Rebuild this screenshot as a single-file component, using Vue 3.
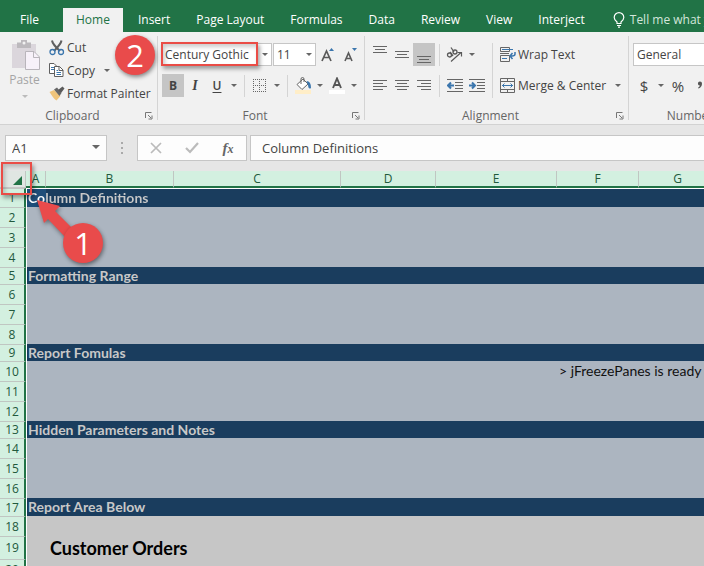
<script setup>
import { ref } from 'vue'

const tabs = ['File', 'Home', 'Insert', 'Page Layout', 'Formulas', 'Data', 'Review', 'View', 'Interject']
const activeTab = ref('Home')
const fontName = ref('Century Gothic')
const fontSize = ref('11')
const numberFormat = ref('General')
const cellName = ref('A1')
const formula = ref('Column Definitions')

const columns = ['A', 'B', 'C', 'D', 'E', 'F', 'G']

const rows = [
  { n: 1, kind: 'band first', text: 'Column Definitions' },
  { n: 2, kind: 'plain' },
  { n: 3, kind: 'plain' },
  { n: 4, kind: 'plain' },
  { n: 5, kind: 'band', text: 'Formatting Range' },
  { n: 6, kind: 'plain' },
  { n: 7, kind: 'plain' },
  { n: 8, kind: 'plain' },
  { n: 9, kind: 'band', text: 'Report Fomulas' },
  { n: 10, kind: 'plain', note: '> jFreezePanes is ready' },
  { n: 11, kind: 'plain' },
  { n: 12, kind: 'plain' },
  { n: 13, kind: 'band', text: 'Hidden Parameters and Notes' },
  { n: 14, kind: 'plain' },
  { n: 15, kind: 'plain' },
  { n: 16, kind: 'plain' },
  { n: 17, kind: 'band last', text: 'Report Area Below' },
  { n: 18, kind: 'report' },
  { n: 19, kind: 'report tall', title: 'Customer Orders' },
  { n: 20, kind: 'report' }
]

function cellText(row, col) {
  if (col === 'A') return row.text
  if (col === 'B') return row.title
  if (col === 'F') return row.note
  return ''
}
</script>

<template>
  <div class="app">
    <nav class="tabs" aria-label="Ribbon tabs">
      <button
        v-for="tab in tabs"
        :key="tab"
        type="button"
        class="tab"
        :class="{ active: tab === activeTab, file: tab === 'File' }"
        @click="activeTab = tab"
      >{{ tab }}</button>
      <button type="button" class="tell">
        <svg width="12" height="16" viewBox="0 0 12 16" fill="none" stroke="#fff">
          <path d="M4 11.5V10C2.500 8.700 1.200 7.500 1.200 5.400A4.700 4.700 0 0 1 10.800 5.400C10.800 7.500 9.500 8.700 8 10V11.500ZM4 13.500H8M5 15.200H7" stroke-width="1.200" />
        </svg>
        <span>Tell me what you want to do</span>
      </button>
    </nav>

    <div class="ribbon">
      <section class="group clipboard">
        <div class="body">
          <button type="button" class="paste" disabled>
            <svg width="30" height="31" viewBox="0 0 30 31">
              <path d="M1 4H25V28H1Z" fill="#dbd6dc" />
              <path d="M6 2.500H10V0H16V2.500H20V8H6Z" fill="#bcb9bd" />
              <circle cx="13" cy="3" r="1.500" fill="#f1f1f1" />
              <path d="M14.500 11.500H23L28.500 17V29.500H14.500Z" fill="#f7f1f9" stroke="#b9b5bb" />
              <path d="M22.500 11.500V17.500H28.500" fill="none" stroke="#b9b5bb" />
            </svg>
            <span>Paste</span>
            <i class="caret faint"></i>
          </button>
          <div class="commands">
            <button type="button" class="command">
              <svg width="16" height="16" viewBox="0 0 16 16" fill="none">
                <path d="M3 0.500C3.500 4 6 6.500 11 11M12.500 0.500C12 4 9.500 6.500 5 11" stroke="#5f5f5f" stroke-width="2" />
                <circle cx="3.500" cy="12" r="2.500" stroke="#3b76ad" stroke-width="1.300" />
                <circle cx="12" cy="12" r="2.500" stroke="#3b76ad" stroke-width="1.300" />
              </svg>
              <span>Cut</span>
            </button>
            <button type="button" class="command">
              <svg width="16" height="16" viewBox="0 0 16 16">
                <path d="M0.500 0.500H5L8.500 4V10.500H0.500Z" fill="#fff" stroke="#5f5f5f" />
                <path d="M2 4.500H5M2 6.500H5" stroke="#3b76ad" />
                <path d="M5.500 3.500H10.500L14 7V13.500H5.500Z" fill="#fff" stroke="#5f5f5f" />
                <path d="M10 3.500V7.500H14" fill="none" stroke="#5f5f5f" />
                <path d="M7.500 7.500H9M7.500 9.500H12M7.500 11.500H12" stroke="#3b76ad" />
              </svg>
              <span>Copy</span>
              <i class="caret copy-caret"></i>
            </button>
            <button type="button" class="command">
              <svg width="16" height="16" viewBox="0 0 16 16">
                <path d="M0.500 6L5 4L11.500 10L7.500 14.500Q5 13 3.500 10.500Z" fill="#efc47a" />
                <path d="M5 3.500L8 1.500L12.500 7L10.500 10Z" fill="#666" />
                <path d="M9 4L13.500 0.500L15.500 2.500L12 7Z" fill="#5a5a5a" />
              </svg>
              <span>Format Painter</span>
            </button>
          </div>
        </div>
        <footer class="caption">
          <span>Clipboard</span>
          <button type="button" class="launcher" aria-label="Clipboard settings">
            <svg width="8" height="8" viewBox="0 0 8 8" fill="none" stroke="#777"><path d="M0.500 6V0.500H6.500M3 3L6 6M7 3.500V7H3.500" /></svg>
          </button>
        </footer>
      </section>

      <section class="group font">
        <div class="body stack">
          <div class="line">
            <label class="drop name">
              <select v-model="fontName" aria-label="Font"><option>Century Gothic</option></select>
              <i class="caret"></i>
            </label>
            <label class="drop size">
              <select v-model="fontSize" aria-label="Font size"><option>11</option></select>
              <i class="caret"></i>
            </label>
            <button type="button" class="tool step" aria-label="Increase font size">
              <svg width="14" height="16" viewBox="0 0 14 16"><path d="M1 14L5.500 4L10 14M2.500 10.500H8.500" fill="none" stroke="#5a5a5a" stroke-width="1.700" /><path d="M8 4L10.500 1L13 4Z" fill="#3b76ad" /></svg>
            </button>
            <button type="button" class="tool step" aria-label="Decrease font size">
              <svg width="14" height="16" viewBox="0 0 14 16"><path d="M1 14L4.500 6L8 14M2.500 11.500H6.500" fill="none" stroke="#5a5a5a" stroke-width="1.600" /><path d="M8 1H13L10.500 4Z" fill="#3b76ad" /></svg>
            </button>
          </div>
          <div class="line">
            <button type="button" class="tool on bold">B</button>
            <button type="button" class="tool italic">I</button>
            <button type="button" class="tool underline">U</button>
            <i class="caret slot"></i>
            <i class="rule"></i>
            <button type="button" class="tool" aria-label="Borders">
              <svg width="14" height="14" viewBox="0 0 14 14" fill="none" stroke="#666"><path d="M0 0.500H13M0 6.500H13M0 12.500H13M0.500 0V13M6.500 0V13M12.500 0V13" stroke-dasharray="1 1" /></svg>
            </button>
            <i class="caret slot"></i>
            <i class="rule"></i>
            <button type="button" class="tool" aria-label="Fill color">
              <svg width="17" height="17" viewBox="0 0 17 17"><path d="M2 7.500L8 2L13 7L7 12.500Z" fill="#fff" stroke="#666" /><path d="M6 7V2Q6 0.500 7.500 0.500T9 2V5" fill="none" stroke="#666" /><path d="M11.500 4Q16 4 16 11Q13.500 13 13 8Z" fill="#3b76ad" /><rect y="13" width="16" height="4" fill="#ffeec8" /></svg>
            </button>
            <i class="caret slot"></i>
            <button type="button" class="tool" aria-label="Font color">
              <svg width="16" height="17" viewBox="0 0 16 17"><path d="M4 11L8 1.500L12 11M5 8H11" fill="none" stroke="#555" stroke-width="1.900" /><rect y="13" width="16" height="4" fill="#fff" /></svg>
            </button>
            <i class="caret slot"></i>
          </div>
        </div>
        <footer class="caption">
          <span>Font</span>
          <button type="button" class="launcher" aria-label="Font settings">
            <svg width="8" height="8" viewBox="0 0 8 8" fill="none" stroke="#777"><path d="M0.500 6V0.500H6.500M3 3L6 6M7 3.500V7H3.500" /></svg>
          </button>
        </footer>
      </section>

      <section class="group alignment">
        <div class="body">
          <div class="stack">
            <div class="line">
              <button type="button" class="tool" aria-label="Top align">
                <svg width="14" height="18" viewBox="0 0 14 18" stroke="#666"><path d="M0 0.500H14M2 3.500H12M0 6.500H14" /></svg>
              </button>
              <button type="button" class="tool" aria-label="Middle align">
                <svg width="14" height="18" viewBox="0 0 14 18" stroke="#666"><path d="M0 5.500H14M2 8.500H12M0 11.500H14" /></svg>
              </button>
              <button type="button" class="tool on" aria-label="Bottom align">
                <svg width="14" height="18" viewBox="0 0 14 18" stroke="#666"><path d="M0 10.500H14M2 13.500H12M0 16.500H14" /></svg>
              </button>
              <i class="rule"></i>
              <button type="button" class="tool" aria-label="Orientation">
                <svg width="18" height="16" viewBox="0 0 18 16" fill="none" stroke="#5a5a5a">
                  <circle cx="3.500" cy="8" r="2" stroke-width="1.300" /><path d="M4 5L7 9" stroke-width="1.300" />
                  <circle cx="9" cy="5" r="2" stroke-width="1.300" /><path d="M5 0.500L8 5" stroke-width="1.300" />
                  <path d="M5 14.500L15 5.500M11.500 5.500H15.500V9.500" stroke-width="1.200" />
                </svg>
              </button>
              <i class="caret slot"></i>
            </div>
            <div class="line">
              <button type="button" class="tool" aria-label="Align left">
                <svg width="14" height="12" viewBox="0 0 14 12" stroke="#666"><path d="M0 0.500H14M0 3.500H10M0 6.500H14M0 9.500H10" /></svg>
              </button>
              <button type="button" class="tool" aria-label="Center">
                <svg width="14" height="12" viewBox="0 0 14 12" stroke="#666"><path d="M0 0.500H14M2 3.500H12M0 6.500H14M2 9.500H12" /></svg>
              </button>
              <button type="button" class="tool" aria-label="Align right">
                <svg width="14" height="12" viewBox="0 0 14 12" stroke="#666"><path d="M0 0.500H14M4 3.500H14M0 6.500H14M4 9.500H14" /></svg>
              </button>
              <i class="rule"></i>
              <button type="button" class="tool" aria-label="Decrease indent">
                <svg width="16" height="14" viewBox="0 0 16 14"><path d="M0 0.500H16M8 3.500H16M8 6.500H16M8 9.500H16M0 12.500H16" stroke="#666" /><path d="M7 6.500H2M4 3.500L1 6.500L4 9.500" fill="none" stroke="#3b76ad" stroke-width="2" /></svg>
              </button>
              <button type="button" class="tool" aria-label="Increase indent">
                <svg width="16" height="14" viewBox="0 0 16 14"><path d="M0 0.500H16M8 3.500H16M8 6.500H16M8 9.500H16M0 12.500H16" stroke="#666" /><path d="M0 6.500H5M3 3.500L6 6.500L3 9.500" fill="none" stroke="#3b76ad" stroke-width="2" /></svg>
              </button>
            </div>
          </div>
          <i class="rule long"></i>
          <div class="stack">
            <button type="button" class="command wide">
              <svg width="16" height="16" viewBox="0 0 16 16" fill="none">
                <path d="M0.500 0.500H9.500V4.500H0.500ZM0.500 8.500H9.500V14.500H0.500ZM0 6.500H9" stroke="#666" />
                <path d="M2 2.500H13M2 11.500H7" stroke="#3b76ad" /><path d="M15 5V7Q15 9 12 9H10M12.500 6L10 9L12.500 12" stroke="#3b76ad" stroke-width="1.500" />
              </svg>
              <span>Wrap Text</span>
            </button>
            <button type="button" class="command wide">
              <svg width="16" height="15" viewBox="0 0 16 15" fill="none">
                <path d="M0.500 0.500H14.500V14.500H0.500ZM0.500 3.500H14.500M0.500 11.500H14.500M7.500 0.500V3.500M7.500 11.500V14.500" stroke="#666" />
                <path d="M2 7.500H13M4.500 5.500L2.500 7.500L4.500 9.500M10.500 5.500L12.500 7.500L10.500 9.500" stroke="#3b76ad" />
              </svg>
              <span>Merge &amp; Center</span>
              <i class="caret copy-caret"></i>
            </button>
          </div>
        </div>
        <footer class="caption">
          <span>Alignment</span>
          <button type="button" class="launcher" aria-label="Alignment settings">
            <svg width="8" height="8" viewBox="0 0 8 8" fill="none" stroke="#777"><path d="M0.500 6V0.500H6.500M3 3L6 6M7 3.500V7H3.500" /></svg>
          </button>
        </footer>
      </section>

      <section class="group number">
        <div class="body stack">
          <div class="line">
            <label class="drop format">
              <select v-model="numberFormat" aria-label="Number format"><option>General</option></select>
              <i class="caret"></i>
            </label>
          </div>
          <div class="line">
            <button type="button" class="tool sign">$</button>
            <i class="caret slot"></i>
            <button type="button" class="tool sign">%</button>
            <button type="button" class="tool" aria-label="Comma style">
              <svg width="6" height="16" viewBox="0 0 6 16"><path d="M3 3.500A2 2 0 0 1 5 5.500Q5 9 1.500 10.500L1 9.700Q2.700 8.700 2.800 7.500A2 2 0 0 1 3 3.500Z" fill="#555" /></svg>
            </button>
          </div>
        </div>
        <footer class="caption"><span>Number</span></footer>
      </section>

      <div class="mark font-box"></div>
      <div class="badge two">2</div>
    </div>

    <div class="formula-bar">
      <div class="name-box">
        <input v-model="cellName" type="text" aria-label="Name box" />
        <button type="button" aria-label="Named cells"><i class="caret big"></i></button>
      </div>
      <svg class="grip" width="3" height="12" viewBox="0 0 3 12" fill="#aaa"><path d="M0 0H2V2H0ZM0 5H2V7H0ZM0 10H2V12H0Z" /></svg>
      <div class="entry">
        <button type="button" aria-label="Cancel">
          <svg width="12" height="12" viewBox="0 0 12 12" stroke="#bbb" stroke-width="1.700"><path d="M1 1L11 11M11 1L1 11" /></svg>
        </button>
        <button type="button" aria-label="Enter">
          <svg width="14" height="12" viewBox="0 0 14 12" fill="none" stroke="#bbb" stroke-width="2.200"><path d="M1 6L5 10L13 1" /></svg>
        </button>
        <button type="button" class="fx" aria-label="Insert function"><span>f</span><small>x</small></button>
      </div>
      <input v-model="formula" class="formula" type="text" aria-label="Formula" />
    </div>

    <main class="sheet">
      <table>
        <colgroup>
          <col class="w-head" />
          <col v-for="c in columns" :key="c" :class="'w-' + c.toLowerCase()" />
        </colgroup>
        <thead>
          <tr>
            <th class="corner">
              <button type="button" aria-label="Select all">
                <svg width="9" height="9" viewBox="0 0 9 9"><path d="M9 0V9H0Z" fill="#217346" /></svg>
              </button>
            </th>
            <th v-for="c in columns" :key="c" scope="col">{{ c }}</th>
          </tr>
        </thead>
        <tbody>
          <tr v-for="row in rows" :key="row.n" :class="row.kind">
            <th scope="row">{{ row.n }}</th>
            <td v-for="c in columns" :key="c" :class="'c-' + c.toLowerCase()"><span>{{ cellText(row, c) }}</span></td>
          </tr>
        </tbody>
      </table>
      <div class="mark corner-box"></div>
      <svg class="arrow" width="42" height="44" viewBox="0 0 42 44"><path d="M1 1L24 7L19 12L38 31L30 39L12 20L8 24Z" fill="#e94b4b" /></svg>
      <div class="badge one">1</div>
    </main>
  </div>
</template>

<style>
body {
  background: #c6c6c6;
}
</style>

<style scoped>
.app {
  overflow: hidden;
  height: 100vh;
  display: flex;
  flex-direction: column;
  font-family: "Open Sans", "Noto Sans", sans-serif;
  font-size: 12px;
  line-height: 16px;
  color: #444;
}
button, input, select {
  font: inherit;
  color: inherit;
  border: 0;
  padding: 0;
  margin: 0;
  background: none;
  border-radius: 0;
  outline: none;
}
svg { display: block; flex: none; }

.tabs {
  flex: none;
  display: flex;
  height: 24px;
  padding-top: 8px;
  background: #217346;
  white-space: nowrap;
}
.tab {
  flex: none;
  padding: 0 13px;
  color: #fff;
}
.tab.file { width: 59px; margin-right: 4px; }
.tab.active { margin-right: 2px; background: #f1f1f1; color: #217346; }
.tell {
  flex: none;
  display: flex;
  align-items: center;
  gap: 5px;
  padding-left: 15px;
  color: #d3e6db;
}

.ribbon {
  position: relative;
  flex: none;
  display: flex;
  padding: 4px 0;
  background: #f1f1f1;
  border-bottom: 1px solid #d2d2d2;
  white-space: nowrap;
}
.group {
  flex: none;
  height: 84px;
  display: flex;
  flex-direction: column;
  justify-content: space-between;
  border-right: 1px solid #d4d4d4;
}
.clipboard { width: 157px; }
.font { width: 206px; }
.alignment { width: 263px; }
.number { width: 126px; }
.body { display: flex; }
.stack { display: flex; flex-direction: column; gap: 8px; }
.font .body, .number .body, .alignment .body { padding: 7px 4px 0 4px; }
.line { display: flex; align-items: center; height: 23px; }
.caption {
  display: flex;
  align-items: center;
  height: 8px;
  padding-right: 4px;
  color: #666;
}
.caption span { flex: 1; text-align: center; }
.launcher { width: 8px; }

.caret {
  flex: none;
  width: 0;
  height: 0;
  border: 3px solid transparent;
  border-top-color: #666;
  border-bottom: 0;
}
.caret.faint { border-top-color: #bbb; }
.caret.big { border-width: 4px 4px 0; }
.caret.slot { margin: 0 3px; }

.paste {
  display: flex;
  flex-direction: column;
  align-items: center;
  width: 49px;
  padding-top: 4px;
  color: #a5a5a5;
}
.paste svg { margin-left: 3px; }
.paste span { margin: 1px 0 7px; }
.commands { display: flex; flex-direction: column; }
.command {
  display: flex;
  align-items: center;
  gap: 2px;
  height: 23px;
}
.command.wide { width: 124px; }
.copy-caret { margin-left: 7px; }

.drop {
  flex: none;
  display: flex;
  align-items: center;
  height: 21px;
  border: 1px solid #c6c6c6;
  background: #fff;
}
.drop select { flex: 1; min-width: 0; height: 21px; padding-left: 3px; appearance: none; }
.drop .caret { margin: 0 3px; }
.drop.name { width: 109px; margin-left: -1px; }
.drop.size { width: 41px; margin-left: 1px; }
.drop.format { width: 108px; }
.tool {
  flex: none;
  display: flex;
  align-items: center;
  justify-content: center;
  width: 22px;
  height: 23px;
}
.tool.on { background: #c5c5c5; }
.tool.step { margin-left: 1px; }
.bold { font-weight: 700; }
.italic { font-family: "Liberation Serif", serif; font-style: italic; font-weight: 700; font-size: 14px; }
.underline { font-weight: 600; text-decoration: underline; text-underline-offset: 2px; }
.sign { font-size: 15px; }
.rule { flex: none; width: 1px; height: 22px; margin: 0 4px; background: #d4d4d4; }
.rule.long { height: 55px; margin: 0 7px 0 4px; }

.formula-bar {
  flex: none;
  display: flex;
  height: 26px;
  padding: 10px 0 10px 5px;
  background: #e6e6e6;
  font-size: 13px;
}
.name-box {
  display: flex;
  align-items: center;
  width: 100px;
  border: 1px solid #c6c6c6;
  background: #fdfdfd;
}
.name-box input { flex: 1; min-width: 0; padding-left: 6px; }
.name-box button { display: flex; padding: 0 6px 2px 0; }
.grip { align-self: center; margin: 0 13px 0 14px; }
.entry {
  display: flex;
  align-items: center;
  justify-content: space-around;
  width: 108px;
  border: 1px solid #c6c6c6;
  background: #fdfdfd;
}
.entry button { width: 24px; display: flex; justify-content: center; align-items: center; }
.entry .fx { align-items: baseline; font-family: "Liberation Serif", serif; font-style: italic; font-weight: 700; font-size: 15px; color: #666; }
.fx small { font-size: 12px; }
.formula {
  flex: 1;
  min-width: 0;
  margin-left: 3px;
  padding-left: 11px;
  border: 1px solid #c6c6c6;
  border-right: 0;
  background: #fdfdfd;
}

.sheet { position: relative; flex: 1; min-height: 0; }
table {
  width: 100%;
  table-layout: fixed;
  border-collapse: separate;
  border-spacing: 0;
}
.w-head { width: 26px; }
.w-a { width: 20px; }
.w-b { width: 128px; }
.w-c { width: 167px; }
.w-d { width: 95px; }
.w-e { width: 121px; }
.w-f { width: 82px; }
.w-g { width: 78px; }
th, td { padding: 0; box-sizing: border-box; }
th { background: #d3f0e0; color: #22593c; font-weight: 400; line-height: 14px; }
thead th {
  height: 17px;
  border-right: 1px solid #c0c6c2;
  border-bottom: 2px solid #217346;
}
thead th.corner { background: #e0e6e2; border-bottom: 1px solid #c6c6c6; }
.corner button { display: flex; margin: 2px 0 0 13px; }
tbody th {
  height: 20px;
  border-top: 1px solid #c0c6c2;
  border-right: 2px solid #217346;
  vertical-align: middle;
}
td {
  background: #acb5c0;
  font-family: Lato, "Open Sans", sans-serif;
  font-size: 14px;
  line-height: 16px;
  white-space: nowrap;
  color: #111;
  vertical-align: middle;
}
td span { display: block; width: 0; padding-left: 2px; }
td.c-a { border-left: 1px solid #fff; padding-left: 0; }
.band th { height: 17px; }
.band.last th { height: 18px; }
.band td { background: #1a3d5e; color: #c8c8c8; font-weight: 700; }
.band td span { padding-left: 1px; }
.band.first td { border-top: 1px solid #fff; }
.band.first th { height: 19px; }
.band.first td.c-a { background: #1f4e79; }
.band.first td.c-a span {
  position: relative;
  width: max-content;
  background: linear-gradient(90deg, #fff 18px, #c8c8c8 18px);
  background-clip: text;
  color: transparent;
}
.report td { background: #c6c6c6; }
.report.tall th { height: 23px; }
.report td.c-b span { font-size: 18px; font-weight: 700; line-height: 20px; color: #000; padding-left: 4px; }

.mark {
  position: absolute;
  box-sizing: border-box;
  border: 2px solid #ea4c46;
  box-shadow: 2px 3px 4px rgba(0, 0, 0, 0.35), inset 2px 3px 4px rgba(0, 0, 0, 0.2);
  pointer-events: none;
}
.font-box { left: 161px; top: 10px; width: 97px; height: 24px; }
.corner-box { left: 1px; top: -9px; width: 31px; height: 33px; }
.badge {
  position: absolute;
  width: 40px;
  height: 40px;
  border-radius: 50%;
  background: #e94b4b;
  color: #fff;
  font-size: 31px;
  line-height: 40px;
  text-align: center;
  box-shadow: 1px 2px 4px rgba(0, 0, 0, 0.45);
}
.two { left: 115px; top: 3px; }
.one { left: 63px; top: 52px; }
.arrow { position: absolute; left: 36px; top: 28px; filter: drop-shadow(1px 2px 2px rgba(0, 0, 0, 0.4)); }
</style>
